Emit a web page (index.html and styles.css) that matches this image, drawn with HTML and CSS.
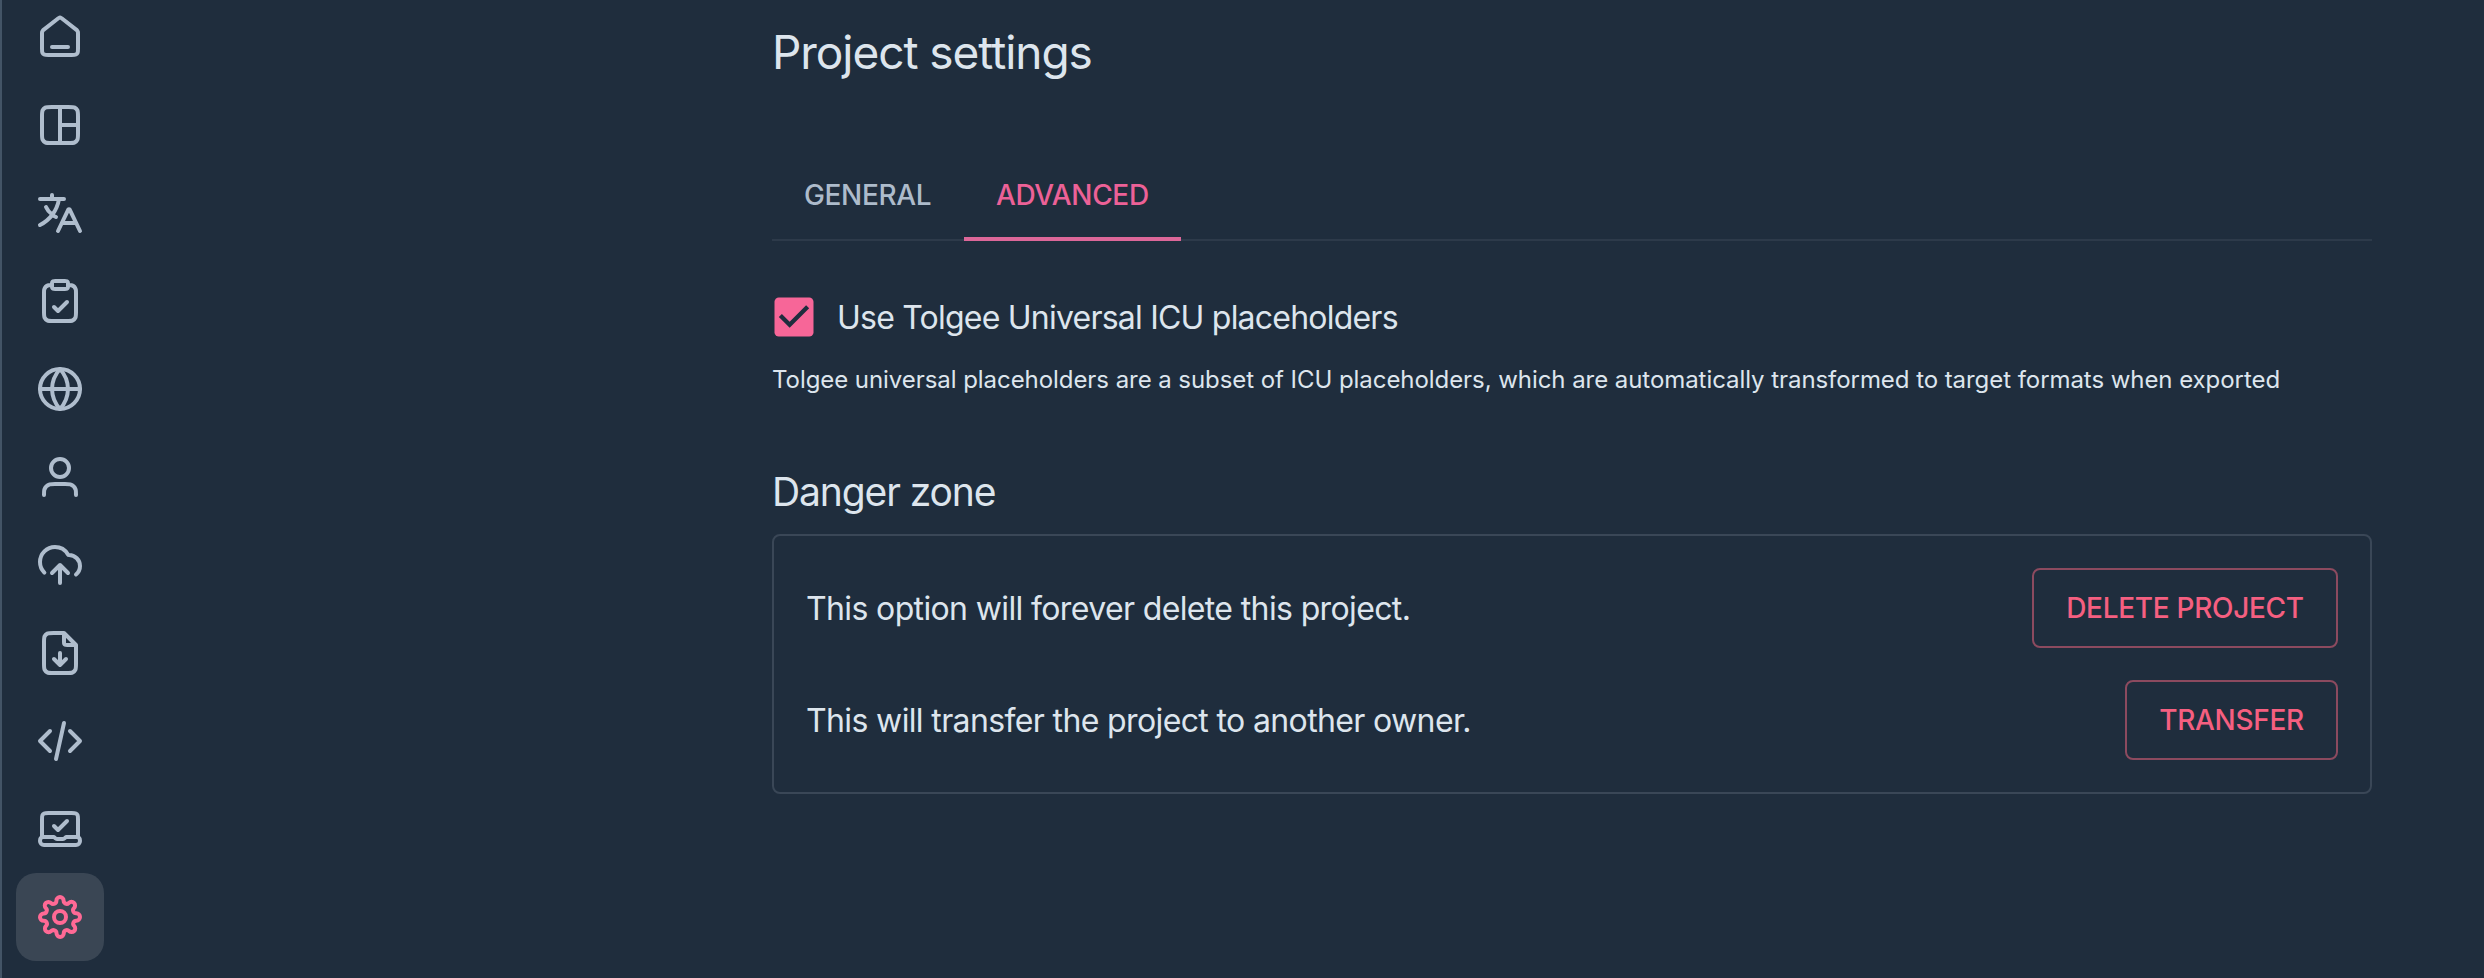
FILE: index.html
```html
<!DOCTYPE html>
<html lang="en">
<head>
<meta charset="utf-8">
<title>Project settings</title>
<link rel="stylesheet" href="styles.css">
</head>
<body>
<div class="app">
  <nav class="rail">
    <a class="rail-item"><svg class="icon" viewBox="0 0 24 24"><path d="M8 17h8M11.018 2.764L4.235 8.039C3.782 8.392 3.555 8.568 3.392 8.789C3.247 8.984 3.14 9.205 3.074 9.439C3 9.704 3 9.991 3 10.565V17.8C3 18.92 3 19.48 3.218 19.908C3.41 20.284 3.716 20.59 4.092 20.782C4.52 21 5.08 21 6.2 21H17.8C18.92 21 19.48 21 19.908 20.782C20.284 20.59 20.59 20.284 20.782 19.908C21 19.48 21 18.92 21 17.8V10.565C21 9.991 21 9.704 20.926 9.439C20.86 9.205 20.753 8.984 20.608 8.789C20.445 8.568 20.218 8.392 19.765 8.039L12.982 2.764C12.631 2.491 12.455 2.354 12.261 2.302C12.09 2.255 11.91 2.255 11.739 2.302C11.545 2.354 11.369 2.491 11.018 2.764Z"/></svg></a>
    <a class="rail-item"><svg class="icon" viewBox="0 0 24 24"><path d="M12 3v18M12 12h9M7.8 3h8.4c1.68 0 2.52 0 3.162.327a3 3 0 0 1 1.311 1.311C21 5.28 21 6.12 21 7.8v8.4c0 1.68 0 2.52-.327 3.162a3 3 0 0 1-1.311 1.311C18.72 21 17.88 21 16.2 21H7.8c-1.68 0-2.52 0-3.162-.327a3 3 0 0 1-1.311-1.311C3 18.72 3 17.88 3 16.2V7.8c0-1.68 0-2.52.327-3.162a3 3 0 0 1 1.311-1.311C5.28 3 6.12 3 7.8 3Z"/></svg></a>
    <a class="rail-item"><svg class="icon" viewBox="0 0 24 24"><path d="M12.913 17H20.087M12.913 17L11 21M12.913 17L15.778 11.009C16.009 10.526 16.125 10.285 16.283 10.209C16.42 10.142 16.58 10.142 16.717 10.209C16.875 10.285 16.991 10.526 17.222 11.009L20.087 17M20.087 17L22 21M2 5H8M8 5H11.5M8 5V3M11.5 5H14M11.5 5C11.004 7.957 9.853 10.636 8.166 12.884M10 14C9.387 13.725 8.763 13.342 8.166 12.884M8.166 12.884C6.813 11.848 5.603 10.427 5 9M8.166 12.884C6.561 15.023 4.471 16.772 2 18"/></svg></a>
    <a class="rail-item"><svg class="icon" viewBox="0 0 24 24"><path d="M16 4C16.93 4 17.395 4 17.777 4.102C18.812 4.38 19.62 5.188 19.898 6.224C20 6.605 20 7.07 20 8V17.2C20 18.88 20 19.72 19.673 20.362C19.385 20.927 18.927 21.385 18.362 21.673C17.72 22 16.88 22 15.2 22H8.8C7.12 22 6.28 22 5.638 21.673C5.074 21.385 4.615 20.927 4.327 20.362C4 19.72 4 18.88 4 17.2V8C4 7.07 4 6.605 4.102 6.224C4.38 5.188 5.188 4.38 6.224 4.102C6.605 4 7.07 4 8 4M9 15L11 17L15.5 12.5M9.6 6H14.4C14.96 6 15.24 6 15.454 5.891C15.642 5.795 15.795 5.642 15.891 5.454C16 5.24 16 4.96 16 4.4V3.6C16 3.04 16 2.76 15.891 2.546C15.795 2.358 15.642 2.205 15.454 2.109C15.24 2 14.96 2 14.4 2H9.6C9.04 2 8.76 2 8.546 2.109C8.358 2.205 8.205 2.358 8.109 2.546C8 2.76 8 3.04 8 3.6V4.4C8 4.96 8 5.24 8.109 5.454C8.205 5.642 8.358 5.795 8.546 5.891C8.76 6 9.04 6 9.6 6Z"/></svg></a>
    <a class="rail-item"><svg class="icon" viewBox="0 0 24 24"><path d="M2 12H22M12 2C14.501 4.738 15.923 8.292 16 12C15.923 15.708 14.501 19.262 12 22M12 2C9.499 4.738 8.077 8.292 8 12C8.077 15.708 9.499 19.262 12 22"/><circle cx="12" cy="12" r="10"/></svg></a>
    <a class="rail-item"><svg class="icon" viewBox="0 0 24 24"><path d="M20 21C20 19.604 20 18.907 19.828 18.339C19.44 17.06 18.44 16.06 17.161 15.672C16.593 15.5 15.896 15.5 14.5 15.5H9.5C8.104 15.5 7.407 15.5 6.839 15.672C5.56 16.06 4.56 17.06 4.172 18.339C4 18.907 4 19.604 4 21"/><circle cx="12" cy="7.5" r="4.5"/></svg></a>
    <a class="rail-item"><svg class="icon" viewBox="0 0 24 24"><path d="M8 16L12 12M12 12L16 16M12 12V21M20 16.743C21.222 15.734 22 14.208 22 12.5C22 9.462 19.538 7 16.5 7C16.282 7 16.077 6.886 15.966 6.698C14.662 4.485 12.254 3 9.5 3C5.358 3 2 6.358 2 10.5C2 12.566 2.835 14.437 4.187 15.794"/></svg></a>
    <a class="rail-item"><svg class="icon" viewBox="0 0 24 24"><path d="M14 2.27V6.4C14 6.96 14 7.24 14.109 7.454C14.205 7.642 14.358 7.795 14.546 7.891C14.76 8 15.04 8 15.6 8H19.73M9 15L12 18M12 18L15 15M12 18V12M14 2H8.8C7.12 2 6.28 2 5.638 2.327C5.074 2.615 4.615 3.074 4.327 3.638C4 4.28 4 5.12 4 6.8V17.2C4 18.88 4 19.72 4.327 20.362C4.615 20.927 5.074 21.385 5.638 21.673C6.28 22 7.12 22 8.8 22H15.2C16.88 22 17.72 22 18.362 21.673C18.927 21.385 19.385 20.927 19.673 20.362C20 19.72 20 18.88 20 17.2V8L14 2Z"/></svg></a>
    <a class="rail-item"><svg class="icon" viewBox="0 0 24 24"><path d="M17 17L22 12L17 7M7 7L2 12L7 17M14 3L10 21"/></svg></a>
    <a class="rail-item"><svg class="icon" viewBox="0 0 24 24"><path d="M9 10.5L11 12.5L15.5 8M21 16V7.2C21 6.08 21 5.52 20.782 5.092A2 2 0 0 0 19.908 4.218C19.48 4 18.92 4 17.8 4H6.2C5.08 4 4.52 4 4.092 4.218A2 2 0 0 0 3.218 5.092C3 5.52 3 6.08 3 7.2V16M4 20H20A2 2 0 0 0 22 18C22 16.9 21.6 16 20.5 16H15.3C14.6 16 14.4 17 13.5 17H10.5C9.6 17 9.4 16 8.7 16H3.5C2.4 16 2 16.9 2 18A2 2 0 0 0 4 20Z"/></svg></a>
    <a class="rail-item rail-item-active"><svg class="icon" viewBox="-1.2 -1.2 26.4 26.4"><g class="gear"><circle cx="12" cy="12" r="3.3"/><path d="M19.4 15a1.65 1.65 0 0 0 .33 1.82l.06.06a2 2 0 0 1 0 2.83 2 2 0 0 1-2.83 0l-.06-.06a1.65 1.65 0 0 0-1.82-.33 1.65 1.65 0 0 0-1 1.51V21a2 2 0 0 1-2 2 2 2 0 0 1-2-2v-.09A1.65 1.65 0 0 0 9 19.4a1.65 1.65 0 0 0-1.82.33l-.06.06a2 2 0 0 1-2.83 0 2 2 0 0 1 0-2.83l.06-.06a1.65 1.65 0 0 0 .33-1.82 1.65 1.65 0 0 0-1.51-1H3a2 2 0 0 1-2-2 2 2 0 0 1 2-2h.09A1.65 1.65 0 0 0 4.6 9a1.65 1.65 0 0 0-.33-1.82l-.06-.06a2 2 0 0 1 0-2.83 2 2 0 0 1 2.83 0l.06.06a1.65 1.65 0 0 0 1.82.33H9a1.65 1.65 0 0 0 1-1.51V3a2 2 0 0 1 2-2 2 2 0 0 1 2 2v.09a1.65 1.65 0 0 0 1 1.51 1.65 1.65 0 0 0 1.82-.33l.06-.06a2 2 0 0 1 2.83 0 2 2 0 0 1 0 2.83l-.06.06a1.65 1.65 0 0 0-.33 1.82V9a1.65 1.65 0 0 0 1.51 1H21a2 2 0 0 1 2 2 2 2 0 0 1-2 2h-.09a1.65 1.65 0 0 0-1.51 1z"/></g></svg></a>
  </nav>
  <main class="content">
    <h1 class="title">Project settings</h1>
    <div class="tabs">
      <a class="tab tab-general">GENERAL</a>
      <a class="tab tab-active">ADVANCED</a>
    </div>
    <label class="option">
      <svg class="checkbox" viewBox="0 0 24 24"><rect class="checkbox-box" x="3" y="3" width="18" height="18" rx="2"/><path class="checkbox-mark" d="M10 17l-5-5 1.41-1.41L10 14.17l7.59-7.59L19 8z"/></svg>
      <span class="option-label">Use Tolgee Universal ICU placeholders</span>
    </label>
    <p class="hint">Tolgee universal placeholders are a subset of ICU placeholders, which are automatically transformed to target formats when exported</p>
    <h2 class="subtitle">Danger zone</h2>
    <section class="danger">
      <div class="danger-row">
        <span class="danger-text">This option will forever delete this project.</span>
        <button class="button button-delete">DELETE PROJECT</button>
      </div>
      <div class="danger-row">
        <span class="danger-text">This will transfer the project to another owner.</span>
        <button class="button button-transfer">TRANSFER</button>
      </div>
    </section>
  </main>
</div>
</body>
</html>
```
FILE: styles.css
```css
* { box-sizing: border-box; }
body {
  margin: 0;
  background: #1f2d3d;
  color: #dde5ed;
  font-family: Inter, "Liberation Sans", sans-serif;
}
.app {
  display: flex;
  height: 978px;
  overflow: hidden;
  border-left: 2px solid #435466;
}
.rail {
  display: flex;
  flex-direction: column;
  flex: none;
  width: 118px;
  padding-left: 14px;
  margin-top: -7px;
}
.rail-item {
  display: flex;
  align-items: center;
  justify-content: center;
  flex: none;
  width: 88px;
  height: 88px;
  border-radius: 20px;
  color: #afbdcd;
}
.rail-item-active { background: #3a4654; color: #ff6995; }
.icon {
  width: 48px;
  height: 48px;
  fill: none;
  stroke: currentColor;
  stroke-width: 2;
  stroke-linecap: round;
  stroke-linejoin: round;
}
.gear { stroke-width: 2.2; }
.content {
  width: 1600px;
  margin-left: 652px;
  white-space: nowrap;
}
.title {
  margin: 0;
  padding-top: 22px;
  font-size: 46px;
  line-height: 60px;
  font-weight: 400;
  letter-spacing: -1.05px;
}
.tabs {
  display: flex;
  height: 96px;
  margin-top: 63px;
  box-shadow: inset 0 -2px #2d3a4a;
}
.tab {
  height: 96px;
  padding: 0 32px;
  line-height: 100px;
  font-size: 28px;
  font-weight: 500;
  letter-spacing: -0.35px;
  color: #adbbcb;
}
.tab-general { width: 192px; }
.tab-active {
  width: 217px;
  color: #ec6197;
  border-bottom: 4px solid #dc6799;
}
.option {
  display: flex;
  align-items: center;
  gap: 17px;
  height: 52px;
  margin: 50px 0 0 -4px;
}
.checkbox { width: 52px; height: 52px; }
.checkbox-box { fill: #f76698; }
.checkbox-mark { fill: #1f2d3d; }
.option-label {
  padding-top: 2px;
  font-size: 32px;
  line-height: 52px;
  letter-spacing: -0.78px;
}
.hint {
  margin: 17px 0 0;
  font-size: 24px;
  line-height: 40px;
  letter-spacing: -0.06px;
}
.subtitle {
  margin: 66px 0 0;
  font-size: 39px;
  line-height: 52px;
  font-weight: 400;
  letter-spacing: -1.1px;
}
.danger {
  display: flex;
  flex-direction: column;
  gap: 32px;
  height: 260px;
  margin-top: 16px;
  padding: 32px;
  border: 2px solid #3a4757;
  border-radius: 8px;
}
.danger-row {
  display: flex;
  align-items: center;
  justify-content: space-between;
  height: 80px;
}
.danger-text {
  padding-top: 2px;
  font-size: 32px;
  line-height: 48px;
  letter-spacing: -0.63px;
}
.button {
  height: 80px;
  padding: 0;
  border: 2px solid #8c4a5f;
  border-radius: 8px;
  background: none;
  color: #f55f80;
  font: 500 28px/48px Inter, "Liberation Sans", sans-serif;
  letter-spacing: -0.3px;
}
.button-delete { width: 306px; }
.button-transfer { width: 213px; }
```
